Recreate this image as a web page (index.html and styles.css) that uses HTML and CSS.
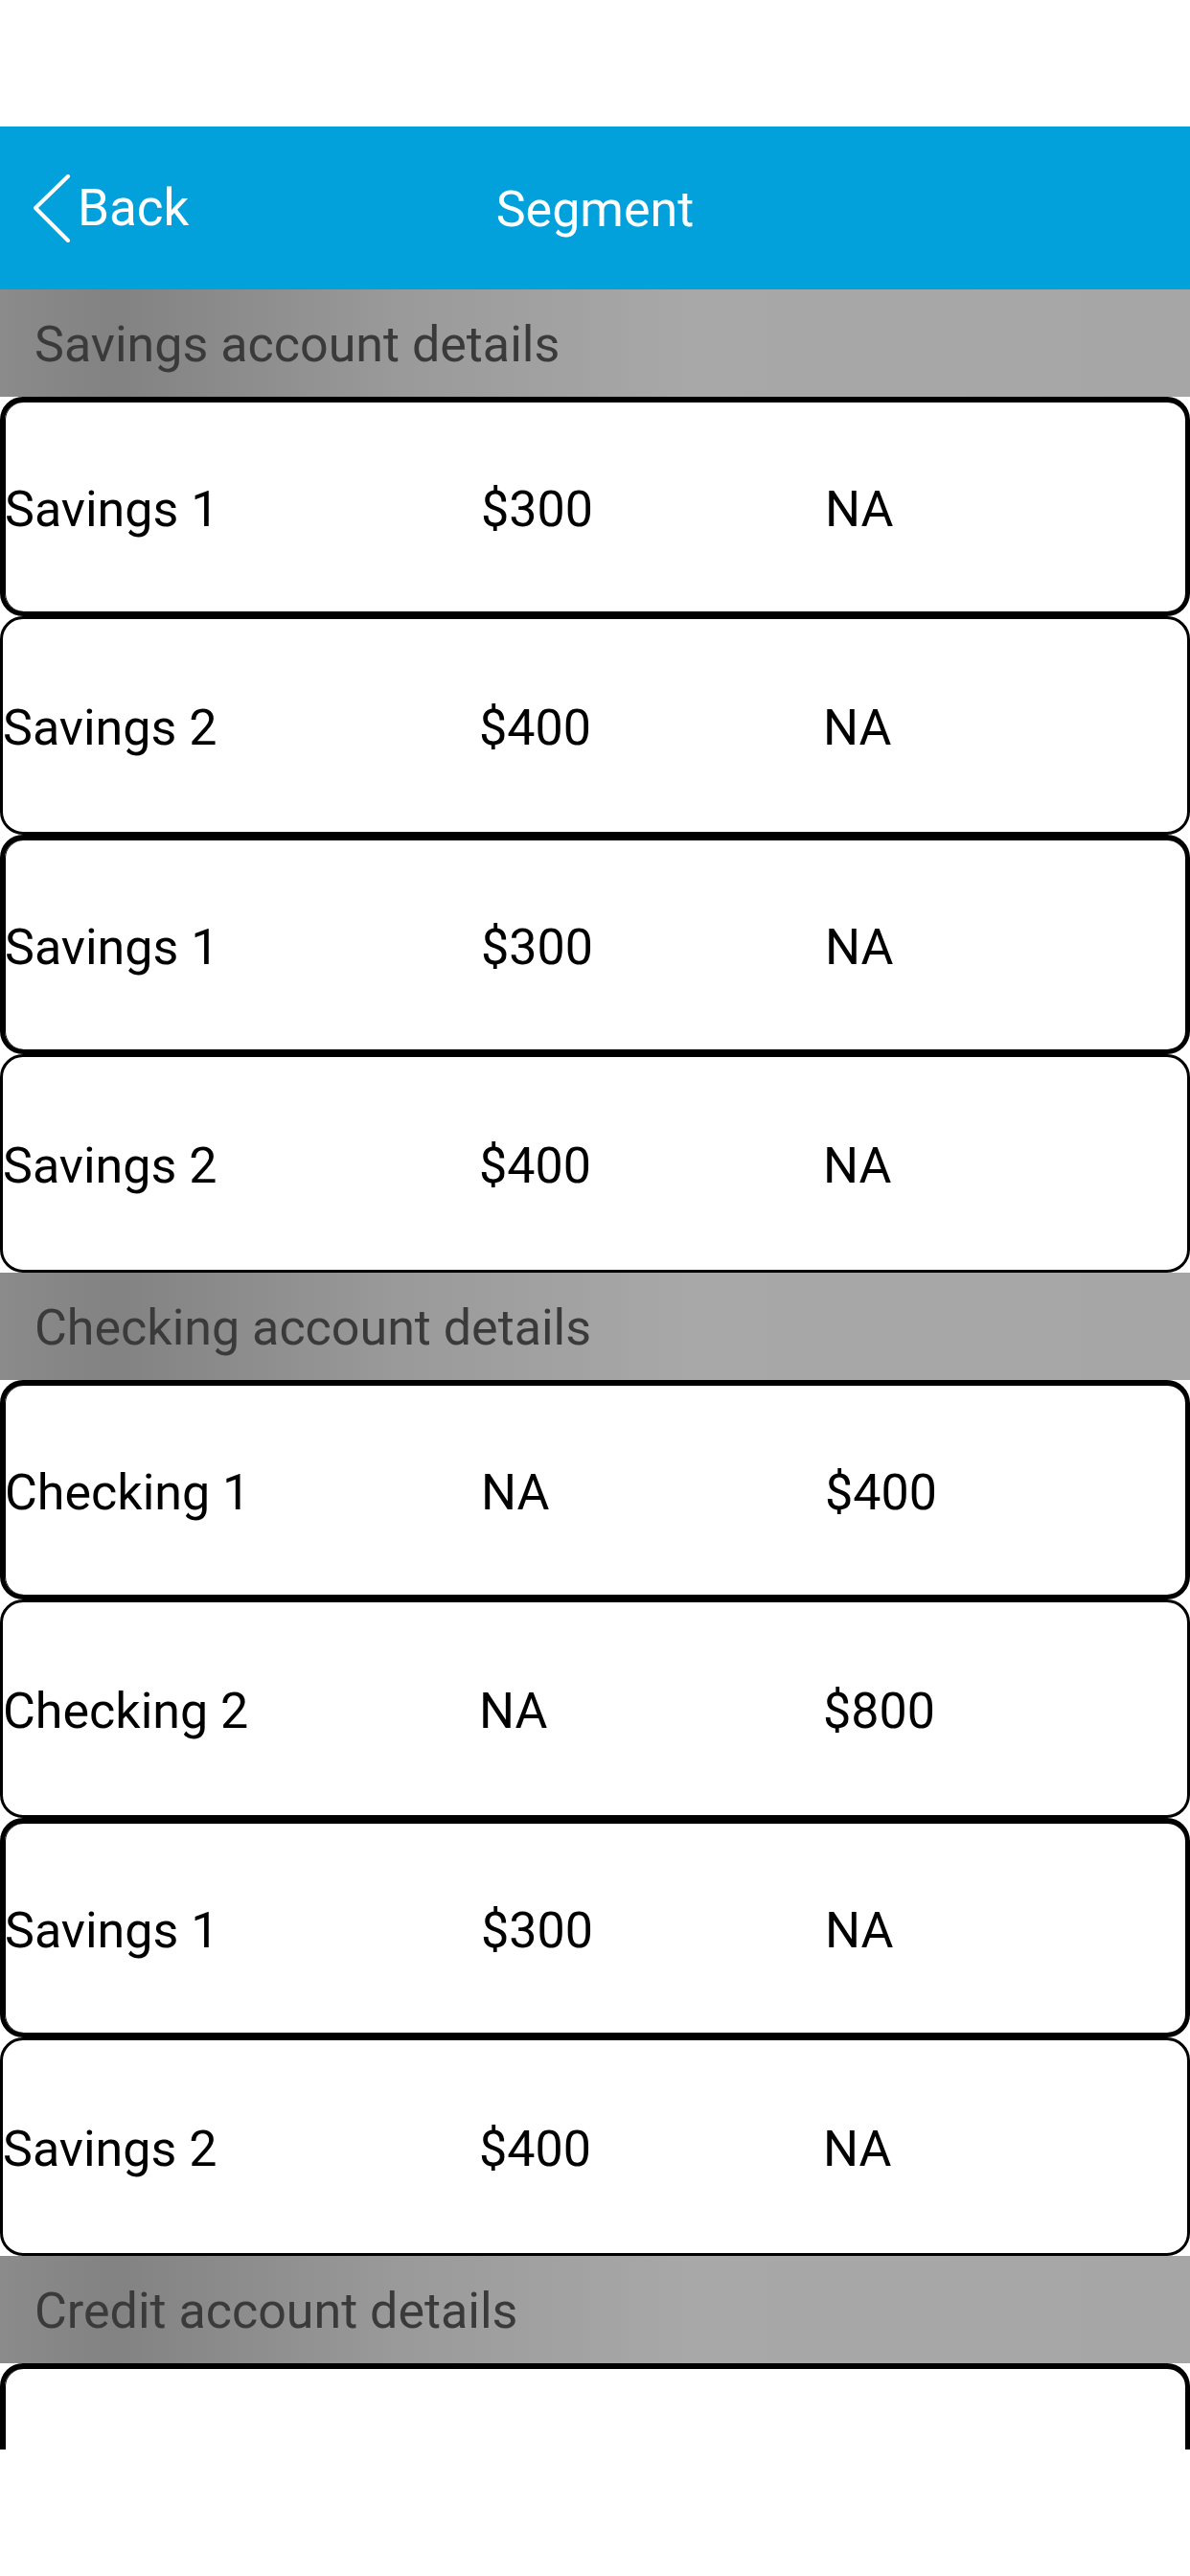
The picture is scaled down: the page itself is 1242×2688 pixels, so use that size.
FILE: index.html
```html
<!DOCTYPE html>
<html>
<head>
<meta charset="utf-8">
<link rel="stylesheet" href="styles.css">
</head>
<body>
<div class="screen">
  <header class="navbar">
    <div class="back">
      <svg class="chev" width="42" height="72" viewBox="0 0 42 72"><polyline points="38,2 4,35 38,69" fill="none" stroke="#fff" stroke-width="4" stroke-linecap="round" stroke-linejoin="round"/></svg>
      <span>Back</span>
    </div>
    <div class="title">Segment</div>
  </header>
  <div class="list">
    <div class="section">Savings account details</div>
    <div class="card thick"><span>Savings 1</span><span>$300</span><span>NA</span></div>
    <div class="card"><span>Savings 2</span><span>$400</span><span>NA</span></div>
    <div class="card thick"><span>Savings 1</span><span>$300</span><span>NA</span></div>
    <div class="card"><span>Savings 2</span><span>$400</span><span>NA</span></div>
    <div class="section">Checking account details</div>
    <div class="card thick"><span>Checking 1</span><span>NA</span><span>$400</span></div>
    <div class="card"><span>Checking 2</span><span>NA</span><span>$800</span></div>
    <div class="card thick"><span>Savings 1</span><span>$300</span><span>NA</span></div>
    <div class="card"><span>Savings 2</span><span>$400</span><span>NA</span></div>
    <div class="section">Credit account details</div>
    <div class="card thick"><span></span><span></span><span></span></div>
  </div>
</div>
</body>
</html>
```
FILE: styles.css
```css
html, body {
  margin: 0;
  padding: 0;
  background: #fff;
}
body {
  font-family: Roboto, "Liberation Sans", sans-serif;
  width: 1242px;
  height: 2688px;
  overflow: hidden;
}
.screen {
  margin-top: 132px;
  height: 2424px;
  overflow: hidden;
  display: flex;
  flex-direction: column;
}
.navbar {
  height: 170px;
  flex: none;
  background: #02a1dc;
  position: relative;
  display: flex;
  align-items: center;
  justify-content: center;
  color: #fff;
  font-size: 52px;
}
.back {
  position: absolute;
  left: 33px;
  top: 0;
  bottom: 0;
  display: flex;
  align-items: center;
  gap: 6px;
}
.back span {
  font-size: 53px;
}
.chev {
  display: block;
  margin-top: 1px;
}
.title {
  font-size: 52px;
  margin-top: 2px;
}
.list {
  display: flex;
  flex-direction: column;
}
.section {
  height: 112px;
  flex: none;
  box-sizing: border-box;
  padding-left: 36px;
  padding-top: 3px;
  display: flex;
  align-items: center;
  font-size: 52px;
  color: #3a3a3a;
  background: linear-gradient(to right, #8b8b8b 0px, #828282 120px, #9a9a9a 420px, #a8a8a8 720px, #a6a6a6 1242px);
}
.card {
  height: 228.5px;
  flex: none;
  box-sizing: border-box;
  border: 3px solid #000;
  border-radius: 24px;
  background: #fff;
  display: grid;
  grid-template-columns: 497px 359px 1fr;
  align-items: center;
  font-size: 52px;
  color: #000;
  padding-top: 6px;
}
.card.thick {
  border-width: 6px 5px 5px 5px;
  box-shadow: inset 1px 0 0 #000;
}
```
